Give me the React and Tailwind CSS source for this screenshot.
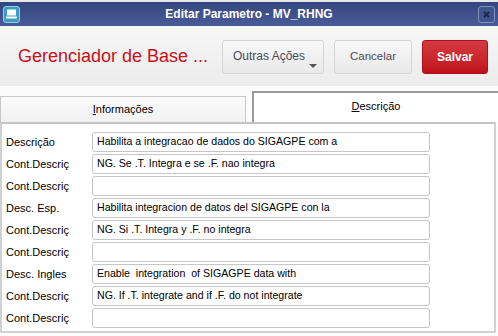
import React from "react";

const rows = [
  ["Descrição", "Habilita a integracao de dados do SIGAGPE com a"],
  ["Cont.Descriç", "NG. Se .T. Integra e se .F. nao integra"],
  ["Cont.Descriç", ""],
  ["Desc. Esp.", "Habilita integracion de datos del SIGAGPE con la"],
  ["Cont.Descriç", "NG. Si .T. Integra y .F. no integra"],
  ["Cont.Descriç", ""],
  ["Desc. Ingles", "Enable  integration  of SIGAGPE data with"],
  ["Cont.Descriç", "NG. If .T. integrate and if .F. do not integrate"],
  ["Cont.Descriç", ""],
];

function Row({ label, value }) {
  return (
    <div className="flex items-center h-[22px]">
      <div className="w-[86px] text-[11px] text-black">{label}</div>
      <div className="w-[338px] h-[20px] border border-[#c6c6c6] rounded-[3px] bg-white px-[4px] flex items-center text-[10.6px] text-black whitespace-pre">
        {value}
      </div>
    </div>
  );
}

export default function App() {
  return (
    <div
      className="w-[498px] h-[336px] overflow-hidden bg-[#f0f0f0] flex flex-col"
      style={{ fontFamily: '"Liberation Sans", Arial, sans-serif' }}
    >
      <div className="h-[2px] bg-[#e8e8e8]" />
      {/* title bar */}
      <div className="h-[24px] bg-gradient-to-b from-[#34467f] to-[#4a5c97] flex items-center justify-between px-[3px] relative">
        <div className="w-[17px] h-[17px] rounded-[3px] bg-[#3d9bc4] border border-[#8fd0ea] flex items-center justify-center">
          <svg width="11" height="10" viewBox="0 0 11 10">
            <rect x="1" y="0.5" width="9" height="6" fill="white" />
            <rect x="0" y="7.5" width="11" height="2" fill="white" />
          </svg>
        </div>
        <div className="absolute inset-0 flex items-center justify-center text-white font-bold text-[12px]">
          Editar Parametro - MV_RHNG
        </div>
        <div className="w-[17px] h-[17px] rounded-[3px] border border-[#7f8fbf] bg-[#42548f] flex items-center justify-center relative">
          <svg width="7" height="7" viewBox="0 0 7 7">
            <path d="M1 1 L6 6 M6 1 L1 6" stroke="#1d2748" strokeWidth="2" />
          </svg>
        </div>
      </div>
      {/* header */}
      <div className="h-[60px] bg-gradient-to-b from-[#f7f7f7] to-[#ececec] flex items-center pl-[18px]">
        <div className="text-[18px] text-[#c8101a] w-[204px]">Gerenciador de Base ...</div>
        <div className="relative w-[102px] h-[34px] rounded-[3px] border border-[#d4d4d4] bg-gradient-to-b from-[#f8f8f8] to-[#e9e9e9] flex items-center pl-[10px] text-[12px] text-[#4a4a58] mt-[2px]">
          <span className="-mt-[2px]">Outras Ações</span>
          <svg className="absolute right-[6px] bottom-[5px]" width="8" height="4" viewBox="0 0 8 4">
            <path d="M0 0 L8 0 L4 4 Z" fill="#555" />
          </svg>
        </div>
        <div className="ml-[10px] w-[78px] h-[34px] rounded-[3px] border border-[#d4d4d4] bg-gradient-to-b from-[#f8f8f8] to-[#e9e9e9] flex items-center justify-center text-[11.5px] text-[#4a4a58] mt-[2px]">
          Cancelar
        </div>
        <div className="ml-[10px] w-[66px] h-[34px] rounded-[3px] border border-[#b01018] bg-gradient-to-b from-[#d43a40] to-[#c0101a] flex items-center justify-center text-[12px] font-bold text-white mt-[2px]">
          Salvar
        </div>
      </div>
      {/* tabs */}
      <div className="h-[36px] bg-[#fbfbfb] flex items-end">
        <div className="w-[246px] h-[26px] border border-b-0 border-[#c8c8c8] bg-gradient-to-b from-[#fafafa] to-[#f2f2f2] flex items-center justify-center text-[11px] text-black">
          <span><span className="underline">I</span>nformações</span>
        </div>
        <div className="ml-[6px] flex-1 h-[31px] border-t-2 border-l-2 border-[#9a9a9a] bg-white flex items-center justify-center text-[11px] text-black">
          <span className="-mt-[2px]"><span className="underline">D</span>escrição</span>
        </div>
      </div>
      {/* panel */}
      <div className="bg-[#fbfbfb] flex-1 pb-[3px] pr-[2px]">
        <div className="h-full border-2 border-t-[#c4c4c4] border-[#d0d0d0] rounded-b-[2px] bg-white pt-[7px] pl-[4px]">
          {rows.map(([l, v], i) => (
            <Row key={i} label={l} value={v} />
          ))}
        </div>
      </div>
    </div>
  );
}
